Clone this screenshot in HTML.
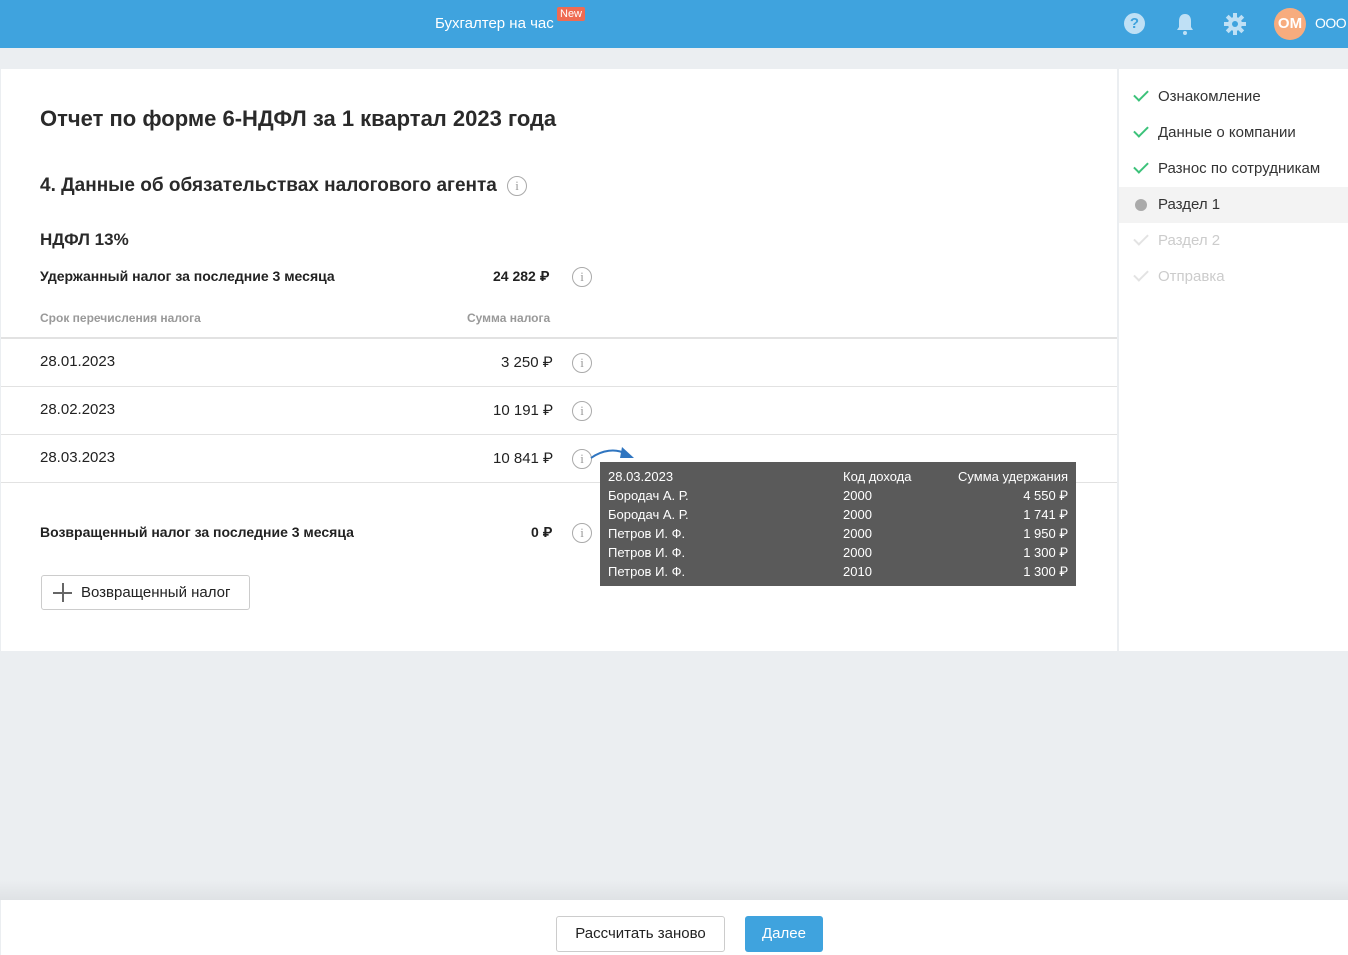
<!DOCTYPE html>
<html><head><meta charset="utf-8"><style>
*{margin:0;padding:0;box-sizing:border-box}
body{width:1348px;height:955px;overflow:hidden;background:#ebeef1;font-family:"Liberation Sans",Roboto,sans-serif;color:#222;position:relative}
.a{position:absolute;white-space:nowrap}
.hdr{position:absolute;left:0;top:0;width:1348px;height:48px;background:#3fa3de}
.main{position:absolute;left:1px;top:69px;width:1116px;height:582px;background:#fff}
.side{position:absolute;left:1119px;top:69px;width:229px;height:582px;background:#fff}
.line{position:absolute;left:1px;width:1116px;height:1px;background:#e2e2e2}
.info{position:absolute;width:20px;height:20px;border:1.5px solid #aaa;border-radius:50%;color:#999;font-size:13px;text-align:center;line-height:17px;font-family:"Liberation Serif",serif}
.tt{position:absolute;left:600px;top:462px;width:476px;height:124px;background:#5a5a5a;color:#fff;font-size:13px}
.tt div{position:absolute;white-space:nowrap}
.r{text-align:right}
.chk{position:absolute;left:1134px;width:14px;height:8px;border-left:2px solid #3cc27a;border-bottom:2px solid #3cc27a;transform:rotate(-45deg)}
.si{position:absolute;left:1158px;font-size:15px;color:#333}
</style></head><body>
<div class="hdr"></div>
<div class="a" style="left:435px;top:15px;color:#fff;font-size:15px">Бухгалтер на час</div>
<div class="a" style="left:557px;top:7px;background:#ef6b52;color:#fff;font-size:11px;padding:1px 3px;border-radius:2px">New</div>
<div class="a" style="left:1124px;top:13px;width:21px;height:21px;border-radius:50%;background:#bfe0f5;color:#3fa3de;font-weight:bold;font-size:15px;text-align:center;line-height:21px">?</div>
<svg class="a" style="left:1175px;top:12px" width="20" height="24" viewBox="0 0 20 24"><path d="M10 2c-4 0-6 3-6 7v6l-2 3h16l-2-3V9c0-4-2-7-6-7z" fill="#bfe0f5"/><circle cx="10" cy="21" r="2" fill="#bfe0f5"/></svg>
<svg class="a" style="left:1224px;top:13px" width="22" height="22" viewBox="0 0 22 22"><g fill="#bfe0f5"><circle cx="11" cy="11" r="7"/><rect x="9" y="0" width="4" height="22"/><rect x="0" y="9" width="22" height="4"/><rect x="9" y="0" width="4" height="22" transform="rotate(45 11 11)"/><rect x="9" y="0" width="4" height="22" transform="rotate(-45 11 11)"/></g><circle cx="11" cy="11" r="3" fill="#3fa3de"/></svg>
<div class="a" style="left:1274px;top:8px;width:32px;height:32px;border-radius:50%;background:#f7ac7e;color:#fff;font-weight:bold;font-size:15px;text-align:center;line-height:32px">ОМ</div>
<div class="a" style="left:1315px;top:15px;color:#fff;font-size:14px;letter-spacing:-0.5px">ООО</div>

<div class="main"></div>
<div class="side"></div>
<div class="a" style="left:40px;top:106px;font-size:22px;font-weight:bold;color:#2a2a2a">Отчет по форме 6-НДФЛ за 1 квартал 2023 года</div>
<div class="a" style="left:40px;top:175px;font-size:19px;font-weight:bold;color:#2a2a2a">4. Данные об обязательствах налогового агента</div>
<div class="info" style="left:507px;top:176px">i</div>
<div class="a" style="left:40px;top:230px;font-size:17px;font-weight:bold;color:#2a2a2a">НДФЛ 13%</div>
<div class="a" style="left:40px;top:268px;font-size:14px;font-weight:bold">Удержанный налог за последние 3 месяца</div>
<div class="a" style="left:493px;top:268px;font-size:14px;font-weight:bold">24 282 ₽</div>
<div class="info" style="left:572px;top:267px">i</div>
<div class="a" style="left:40px;top:311px;font-size:12px;color:#999;font-weight:bold">Срок перечисления налога</div>
<div class="a" style="left:467px;top:311px;font-size:12px;color:#999;font-weight:bold">Сумма налога</div>
<div class="line" style="top:337px;height:2px"></div>
<div class="a" style="left:40px;top:353px;font-size:15px">28.01.2023</div>
<div class="a" style="left:501px;top:353px;font-size:15px">3 250 ₽</div>
<div class="info" style="left:572px;top:353px">i</div>
<div class="line" style="top:386px"></div>
<div class="a" style="left:40px;top:401px;font-size:15px">28.02.2023</div>
<div class="a" style="left:493px;top:401px;font-size:15px">10 191 ₽</div>
<div class="info" style="left:572px;top:401px">i</div>
<div class="line" style="top:434px"></div>
<div class="a" style="left:40px;top:449px;font-size:15px">28.03.2023</div>
<div class="a" style="left:493px;top:449px;font-size:15px">10 841 ₽</div>
<div class="info" style="left:572px;top:449px">i</div>
<div class="line" style="top:482px"></div>
<svg class="a" style="left:588px;top:444px" width="50" height="20" viewBox="0 0 50 20"><path d="M3 14C14 6 28 4 38 10" stroke="#2f75c0" stroke-width="2" fill="none"/><path d="M34 3L46 14L32 14Z" fill="#2f75c0"/></svg>
<div class="a" style="left:40px;top:524px;font-size:14px;font-weight:bold">Возвращенный налог за последние 3 месяца</div>
<div class="a" style="left:531px;top:524px;font-size:14px;font-weight:bold">0 ₽</div>
<div class="info" style="left:572px;top:523px">i</div>
<div class="a" style="left:41px;top:575px;width:209px;height:35px;border:1px solid #ccc;border-radius:3px;font-size:15px;padding:8px 0 0 39px">Возвращенный налог</div>
<div class="a" style="left:53px;top:592px;width:19px;height:1.5px;background:#666"></div>
<div class="a" style="left:62px;top:583px;width:1.5px;height:19px;background:#666"></div>

<div class="tt">
<div style="left:8px;top:7px">28.03.2023</div><div style="left:243px;top:7px">Код дохода</div><div class="r" style="right:8px;top:7px">Сумма удержания</div>
<div style="left:8px;top:26px">Бородач А. Р.</div><div style="left:243px;top:26px">2000</div><div style="right:8px;top:26px">4 550 ₽</div>
<div style="left:8px;top:45px">Бородач А. Р.</div><div style="left:243px;top:45px">2000</div><div style="right:8px;top:45px">1 741 ₽</div>
<div style="left:8px;top:64px">Петров И. Ф.</div><div style="left:243px;top:64px">2000</div><div style="right:8px;top:64px">1 950 ₽</div>
<div style="left:8px;top:83px">Петров И. Ф.</div><div style="left:243px;top:83px">2000</div><div style="right:8px;top:83px">1 300 ₽</div>
<div style="left:8px;top:102px">Петров И. Ф.</div><div style="left:243px;top:102px">2010</div><div style="right:8px;top:102px">1 300 ₽</div>
</div>

<div class="chk" style="top:90px"></div><div class="si" style="top:88px">Ознакомление</div>
<div class="chk" style="top:126px"></div><div class="si" style="top:124px">Данные о компании</div>
<div class="chk" style="top:162px"></div><div class="si" style="top:160px">Разнос по сотрудникам</div>
<div class="a" style="left:1119px;top:187px;width:229px;height:36px;background:#f3f3f3"></div>
<div class="a" style="left:1135px;top:199px;width:12px;height:12px;border-radius:50%;background:#aaa"></div>
<div class="si" style="top:196px">Раздел 1</div>
<div class="chk" style="top:234px;border-color:#e3e3e3"></div><div class="si" style="top:232px;color:#ccc">Раздел 2</div>
<div class="chk" style="top:270px;border-color:#e3e3e3"></div><div class="si" style="top:268px;color:#ccc">Отправка</div>

<div class="a" style="left:0;top:880px;width:1348px;height:20px;background:linear-gradient(#ebeef1,#dfe2e5)"></div>
<div class="a" style="left:1px;top:900px;width:1347px;height:55px;background:#fff"></div>
<div class="a" style="left:556px;top:916px;width:169px;height:36px;border:1px solid #ccc;border-radius:3px;font-size:15px;text-align:center;line-height:34px">Рассчитать заново</div>
<div class="a" style="left:745px;top:916px;width:78px;height:36px;background:#3fa3de;border-radius:3px;color:#fff;font-size:15px;text-align:center;line-height:36px">Далее</div>
</body></html>
